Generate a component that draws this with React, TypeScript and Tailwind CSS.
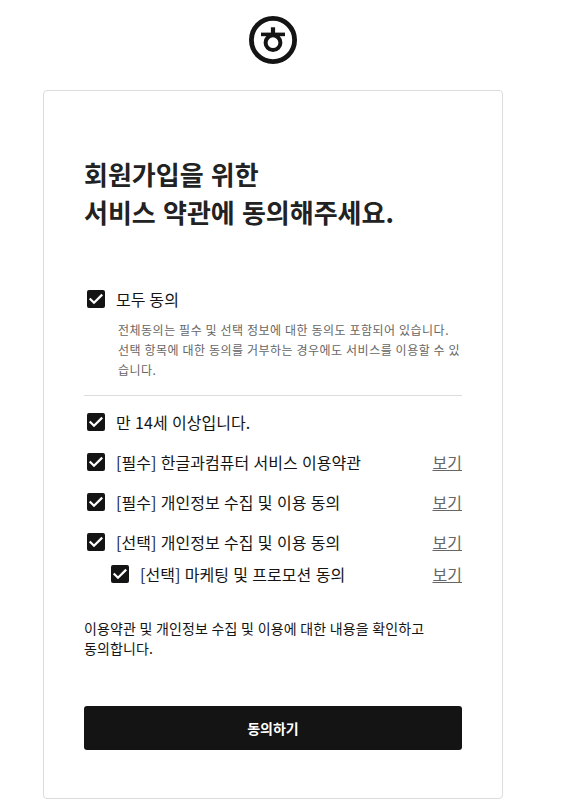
const TERMS = [
  { label: "만 14세 이상입니다." },
  { label: "[필수] 한글과컴퓨터 서비스 이용약관", link: true },
  { label: "[필수] 개인정보 수집 및 이용 동의", link: true },
  { label: "[선택] 개인정보 수집 및 이용 동의", link: true },
  { label: "[선택] 마케팅 및 프로모션 동의", link: true, nested: true },
];

function Logo() {
  return (
    <svg viewBox="0 0 48 48" className="h-12 w-12" fill="none" stroke="#141414" aria-hidden>
      <circle cx="24" cy="24" r="21.6" strokeWidth="4.8" />
      <path d="M24 11.3v7" strokeWidth="4.2" />
      <path d="M12 18.4h24" strokeWidth="3.6" />
      <circle cx="24" cy="26.7" r="7.4" strokeWidth="4" />
    </svg>
  );
}

function CheckMark() {
  return (
    <svg viewBox="0 0 18 18" className="h-[18px] w-[18px] shrink-0" aria-hidden>
      <rect width="18" height="18" rx="2" fill="#141414" />
      <path d="M2.7 8.5l4.3 4.3 8.2-8.2" fill="none" stroke="#fff" strokeWidth="2.2" />
    </svg>
  );
}

export default function App() {
  return (
    <main className="h-[811px] w-[568px] overflow-hidden bg-white pt-4 font-['Noto_Sans_CJK_KR',sans-serif] text-[#141414]">
      <div className="ml-[249px]">
        <Logo />
      </div>
      <section className="mt-[26px] ml-[43px] h-[709px] w-[460px] rounded border border-[#dcdcdc] px-10 pt-16">
        <h1 className="text-[26px] leading-[38px] font-bold [word-spacing:1.3px] whitespace-nowrap text-[#222]">
          회원가입을 위한
          <br />
          서비스 약관에 동의해주세요.
        </h1>
        <div className="mt-[56px] flex h-6 items-center gap-[11px] pl-[3px] text-[16px] tracking-[0.1px]">
          <CheckMark />
          <span>모두 동의</span>
        </div>
        <p className="mt-[9px] pl-[34px] text-[12px] leading-5 tracking-[0.5px] [word-spacing:0.2px] whitespace-nowrap text-[#666]">
          전체동의는 필수 및 선택 정보에 대한 동의도 포함되어 있습니다.
          <br />
          선택 항목에 대한 동의를 거부하는 경우에도 서비스를 이용할 수 있
          <br />
          습니다.
        </p>
        <hr className="mt-[15px] border-[#dcdcdc]" />
        <ul className="mt-[14px] text-[16px] leading-6 tracking-[0.03px] [word-spacing:0.7px]">
          {TERMS.map((term) => (
            <li
              key={term.label}
              className={term.nested ? "-mt-2 flex h-6 items-center pl-[27px]" : "mb-4 flex h-6 items-center pl-[3px]"}
            >
              <CheckMark />
              <span className="ml-[11px] whitespace-nowrap">{term.label}</span>
              {term.link && <a className="ml-auto text-[#666] underline">보기</a>}
            </li>
          ))}
        </ul>
        <p className="mt-8 text-[14px] leading-5 tracking-[0.1px] [word-spacing:0.35px] whitespace-nowrap">
          이용약관 및 개인정보 수집 및 이용에 대한 내용을 확인하고
          <br />
          동의합니다.
        </p>
        <button className="mt-12 h-11 w-full rounded-[3px] bg-[#141414] text-[14px] font-bold text-white">동의하기</button>
      </section>
    </main>
  );
}
